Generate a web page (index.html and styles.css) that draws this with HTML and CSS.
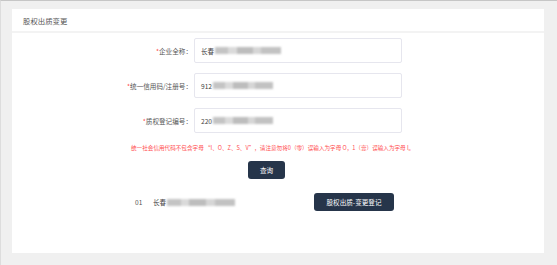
FILE: index.html
```html
<!DOCTYPE html>
<html lang="zh-CN">
<head>
<meta charset="utf-8">
<title>股权出质变更</title>
<link rel="stylesheet" href="styles.css">
</head>
<body>
<div class="page">
  <div class="card">
    <div class="card-head">股权出质变更</div>
    <div class="form">
      <div class="fields">
        <div class="row">
          <label class="label"><span class="req">*</span>企业全称：</label>
          <div class="input"><span class="val">长春</span><span class="blur blur-a"></span></div>
        </div>
        <div class="row">
          <label class="label"><span class="req">*</span>统一信用码/注册号：</label>
          <div class="input"><span class="val">912</span><span class="blur blur-b"></span></div>
        </div>
        <div class="row">
          <label class="label"><span class="req">*</span>质权登记编号：</label>
          <div class="input"><span class="val">220</span><span class="blur blur-b"></span></div>
        </div>
      </div>
      <p class="note">统一社会信用代码不包含字母 “I、O、Z、S、V”，请注意勿将0（零）误输入为字母 O，1（壹）误输入为字母 I。</p>
      <div class="actions"><button class="btn btn-query" type="button">查询</button></div>
      <div class="result">
        <span class="idx">01</span>
        <span class="name"><span class="val">长春</span><span class="blur blur-c"></span></span>
        <button class="btn btn-change" type="button">股权出质-变更登记</button>
      </div>
    </div>
  </div>
</div>
</body>
</html>
```

FILE: styles.css
```css
* { box-sizing: border-box; }
html, body { margin: 0; padding: 0; }
body {
  width: 557px;
  height: 265px;
  background: #f0f0f0;
  font-family: "Noto Sans CJK SC", "Noto Sans", sans-serif;
  color: #555;
  overflow: hidden;
}
.page {
  height: 265px;
  border-top: 1px solid #c6c6c6;
  border-left: 1px solid #dddddd;
  padding: 8px 13px 0 11px;
}
.card {
  background: #fff;
  height: 244px;
}
.card-head {
  height: 24px;
  line-height: 24px;
  padding-left: 11px;
  font-size: 7.4px;
  color: #555;
  border-bottom: 2px solid #f3f3f3;
}
.form {
  padding-top: 5px;
  display: flex;
  flex-direction: column;
}
.fields {
  display: flex;
  flex-direction: column;
  gap: 10px;
}
.row {
  display: flex;
  align-items: center;
  height: 25px;
}
.label {
  width: 182px;
  padding-right: 2px;
  text-align: right;
  font-size: 6.6px;
  color: #555;
}
.req { color: #f44; }
.input {
  width: 208px;
  height: 25px;
  border: 1px solid #e6e6ee;
  border-radius: 2px;
  display: flex;
  align-items: center;
  padding-left: 6px;
  font-size: 6.6px;
  color: #333;
}
.val { font-size: 6.6px; color: #444; }
.blur {
  display: inline-block;
  height: 7px;
  margin-left: 1px;
  background: linear-gradient(90deg, #c4c4c4 0 20%, #dadada 20% 33%, #bdbdbd 33% 58%, #d6d6d6 58% 70%, #c2c2c2 70% 100%);
  filter: blur(1.3px);
}
.blur-a { width: 66px; }
.blur-b { width: 60px; }
.blur-c { width: 68px; }
.note {
  margin: 0;
  margin-top: 10px;
  padding-left: 119px;
  height: 10px;
  line-height: 10px;
  font-size: 5.6px;
  color: #ff4d4f;
  white-space: nowrap;
}
.actions {
  margin-top: 8px;
  padding-left: 236px;
  display: flex;
}
.btn {
  border: none;
  background: #26354a;
  color: #fff;
  font-family: inherit;
  font-size: 6.6px;
  border-radius: 3px;
  height: 18px;
  padding: 0;
  cursor: pointer;
}
.btn-query { width: 37px; }
.result {
  margin-top: 14px;
  padding-left: 123px;
  display: flex;
  align-items: center;
  height: 18px;
}
.idx {
  width: 18px;
  font-size: 6.6px;
  color: #555;
}
.name {
  width: 161px;
  display: flex;
  align-items: center;
}
.btn-change { width: 80px; }
```
